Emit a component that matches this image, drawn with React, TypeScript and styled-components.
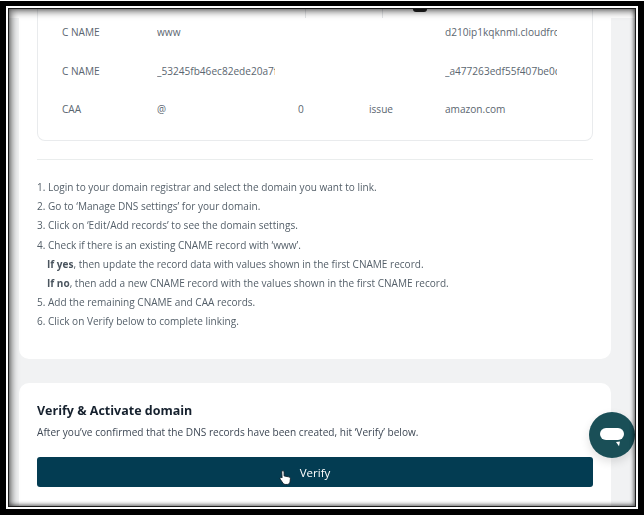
import React from "react"
import styled, { createGlobalStyle } from "styled-components"

const records = [
  { type: "C NAME", host: "www", flag: "", tag: "", value: "d210ip1kqknml.cloudfront.net" },
  { type: "C NAME", host: "_53245fb46ec82ede20a7f3c91", flag: "", tag: "", value: "_a477263edf55f407be0c5d18a" },
  { type: "CAA", host: "@", flag: "0", tag: "issue", value: "amazon.com" },
]

function App() {
  return (
    <Screen>
      <GlobalStyle />
      <BlackFrame>
        <WhiteFrame>
          <Viewport>
            <HeaderStub>
              <HeaderCell $width={297} />
              <HeaderCell $width={77} />
              <HeaderDot />
            </HeaderStub>
            <Content>
              <Card $cutTop>
                <TableCard>
                  {records.map((r, i) => (
                    <Row key={i}>
                      <Cell>{r.type}</Cell>
                      <Cell $clip={118}>{r.host}</Cell>
                      <Cell>{r.flag}</Cell>
                      <Cell>{r.tag}</Cell>
                      <Cell $clip={112}>{r.value}</Cell>
                    </Row>
                  ))}
                </TableCard>
                <Divider />
                <Steps>
                  <li>1. Login to your domain registrar and select the domain you want to link.</li>
                  <li>2. Go to ‘Manage DNS settings’ for your domain.</li>
                  <li>3. Click on ‘Edit/Add records’ to see the domain settings.</li>
                  <li>4. Check if there is an existing CNAME record with ‘www’.</li>
                  <SubStep>
                    <b>If yes</b>, then update the record data with values shown in the first CNAME record.
                  </SubStep>
                  <SubStep>
                    <b>If no</b>, then add a new CNAME record with the values shown in the first CNAME record.
                  </SubStep>
                  <li>5. Add the remaining CNAME and CAA records.</li>
                  <li>6. Click on Verify below to complete linking.</li>
                </Steps>
              </Card>
              <VerifyCard>
                <Title>Verify &amp; Activate domain</Title>
                <Description>
                  After you’ve confirmed that the DNS records have been created, hit ‘Verify’ below.
                </Description>
                <VerifyButton>
                  Verify
                  <Pointer viewBox="0 0 14 18">
                    <path
                      d="M4.2 1.6c.8 0 1.3.6 1.3 1.3v4.4l5 1c1.1.2 1.8 1 1.8 2l-.4 3.3c-.2 1.5-1.3 2.9-3 2.9H6.6c-1 0-1.7-.5-2.3-1.3L1.4 11c-.5-.7-.4-1.5.2-1.9.6-.4 1.2-.2 1.7.3l-.4-6.5c0-.7.5-1.3 1.3-1.3z"
                      fill="#fff"
                      stroke="#10202c"
                      strokeWidth="1"
                    />
                  </Pointer>
                </VerifyButton>
              </VerifyCard>
            </Content>
            <ChatButton aria-label="Chat">
              <svg width="26" height="20" viewBox="0 0 26 20">
                <rect x="1" y="0" width="24" height="12" rx="6" fill="#fff" />
                <path d="M17 14l4-.4-1 4.6z" fill="#fff" />
              </svg>
            </ChatButton>
          </Viewport>
        </WhiteFrame>
      </BlackFrame>
    </Screen>
  )
}

export default App

const GlobalStyle = createGlobalStyle`
  * {
    box-sizing: border-box;
  }

  html,
  body {
    margin: 0;
    background: #fff;
    overflow: hidden;
  }
`

const Screen = styled.div`
  width: 644px;
  height: 516px;
  padding: 1px 0;
  font-family: "Open Sans", "Liberation Sans", sans-serif;
`

const BlackFrame = styled.div`
  height: 100%;
  border: 6px solid #000;
  border-top-width: 5px;
`

const WhiteFrame = styled.div`
  height: 100%;
  border: 2px solid #fff;
`

const Viewport = styled.div`
  position: relative;
  height: 100%;
  overflow: hidden;
  border: 1px solid #1c1c1c;
  background: #f1f2f3;

  &::after {
    content: "";
    position: absolute;
    inset: 0;
    pointer-events: none;
    box-shadow: inset 3px 3px 7px rgba(0, 0, 0, 0.5), inset -1px -1px 4px rgba(0, 0, 0, 0.6);
  }
`

const HeaderStub = styled.div`
  display: flex;
  height: 9px;
  background: #fff;
`

const HeaderCell = styled.div<{ $width: number }>`
  width: ${props => props.$width}px;
  border-right: 1px solid #e4e6e8;
`

const HeaderDot = styled.div`
  width: 14px;
  height: 3px;
  margin-left: 30px;
  border-radius: 0 0 7px 7px;
  background: #222;
`

const Content = styled.div`
  display: flex;
  flex-direction: column;
  gap: 24px;
  padding: 0 24px 0 10px;
  filter: blur(0.35px);
`

const Card = styled.section<{ $cutTop?: boolean }>`
  background: #fff;
  border-radius: ${props => (props.$cutTop ? "0 0 10px 10px" : "10px")};
  padding: 0 18px;
  height: 341px;
`

const TableCard = styled.div`
  height: 132px;
  margin-top: -9px;
  padding: 4px 0 0 24px;
  border: 1px solid #e9ebed;
  border-top: 0;
  border-radius: 0 0 8px 8px;
`

const Row = styled.div`
  display: grid;
  grid-template-columns: 95px 141px 71px 76px 112px;
  height: 38.5px;
  align-items: center;
`

const Cell = styled.div<{ $clip?: number }>`
  font-size: 10.1px;
  color: #5b6670;
  white-space: nowrap;
  overflow: ${props => (props.$clip ? "hidden" : "visible")};
  max-width: ${props => (props.$clip ? `${props.$clip}px` : "none")};
`

const Divider = styled.hr`
  height: 1px;
  margin: 18px 0;
  border: 0;
  background: #eaeded;
`

const Steps = styled.ol`
  margin: 0;
  padding: 0;
  list-style: none;
  font-size: 10.05px;
  line-height: 19.2px;
  color: #545f69;
`

const SubStep = styled.li`
  padding-left: 10px;

  b {
    font-weight: 700;
    color: #4a545e;
  }
`

const VerifyCard = styled.section`
  background: #fff;
  border-radius: 10px;
  height: 140px;
  padding: 19px 18px 0;
`

const Title = styled.h2`
  margin: 0;
  font-size: 12.5px;
  line-height: 17px;
  font-weight: 700;
  color: #16212e;
`

const Description = styled.p`
  margin: 5px 0 0;
  font-size: 10.1px;
  line-height: 16px;
  color: #3d4754;
`

const VerifyButton = styled.button`
  position: relative;
  display: block;
  width: 100%;
  height: 30px;
  margin-top: 17px;
  border: 0;
  border-radius: 3px;
  background: #033c52;
  color: #fff;
  font-family: inherit;
  font-size: 11.5px;
  font-weight: 500;
`

const Pointer = styled.svg`
  position: absolute;
  left: 242px;
  top: 12px;
  width: 13px;
  height: 17px;
`

const ChatButton = styled.button`
  position: absolute;
  left: 580px;
  top: 403px;
  display: flex;
  align-items: center;
  justify-content: center;
  width: 46px;
  height: 46px;
  padding: 6px 0 0;
  border: 0;
  border-radius: 50%;
  background: #1a4f57;
  box-shadow: 0 4px 10px rgba(0, 0, 0, 0.12);
`
